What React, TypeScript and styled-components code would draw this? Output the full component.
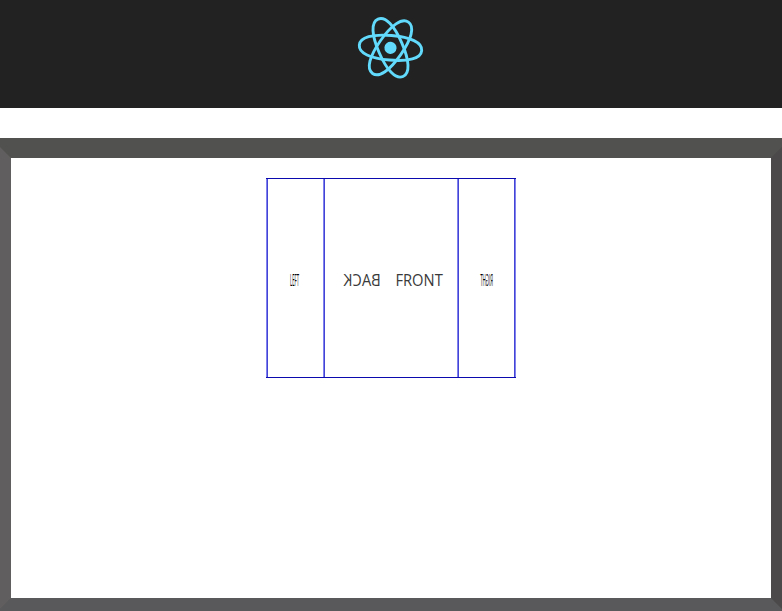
import React from "react";
import styled, { createGlobalStyle } from "styled-components";

const GlobalStyle = createGlobalStyle`
  * { box-sizing: border-box; }
  body { margin: 0; background: #fff; overflow: hidden; }
`;

const Page = styled.div`
  display: flex;
  flex-direction: column;
  height: 611px;
  overflow: hidden;
  font-family: "Open Sans", "Noto Sans", sans-serif;
`;

const Header = styled.header`
  display: flex;
  justify-content: center;
  height: 108px;
  padding-top: 8px;
  background: #222;
`;

const Logo = styled.svg`
  width: 80px;
  height: 80px;
`;

const Stage = styled.main`
  display: flex;
  justify-content: center;
  align-items: flex-start;
  flex: 1;
  margin: 30px -9px -7px;
  padding-top: 20px;
  border: 20px solid;
  border-color: #51514f #4b4949 #59595b #605e5e;
`;

const Cube = styled.div`
  display: grid;
  grid-template-columns: 57px 134px 59px;
  width: 250px;
  height: 200px;
  border-top: 1px solid #0a0aae;
  border-bottom: 1px solid #0a0aae;
`;

const Face = styled.section<{ $last?: boolean }>`
  display: flex;
  align-items: center;
  justify-content: center;
  padding-top: 2px;
  border-left: 1px solid #8080ee;
  border-right: ${(p) => (p.$last ? "1px solid #8080ee" : "none")};
  box-shadow: inset 1px 0 #4444d4${(p) => (p.$last ? ", inset -1px 0 #4444d4" : "")};
`;

const Label = styled.span<{ $scale?: number; $width: number }>`
  display: flex;
  justify-content: center;
  width: ${(p) => p.$width}px;
  font-size: 15.5px;
  line-height: 20px;
  color: ${(p) => (p.$width > 20 ? "#3a3a3a" : "#000")};
  transform: translate(-0.4px, 0.6px) scaleX(${(p) => p.$scale ?? 1});
`;

const orbit = "M-31.3 0C-31.3 -8 -19 -12.3 0 -12.3S31.3 -8 31.3 0S19 12.3 0 12.3S-31.3 8 -31.3 0Z";

export default function App() {
  return (
    <Page>
      <GlobalStyle />
      <Header>
        <Logo viewBox="-40 -40 80 80" aria-label="React">
          <g transform="translate(-0.5 -0.2) rotate(5)" fill="none" stroke="#61dafb" strokeWidth="2.9">
            <path d={orbit} />
            <path d={orbit} transform="rotate(61.5)" />
            <path d={orbit} transform="rotate(120)" />
            <circle r="6.1" fill="#61dafb" stroke="none" />
          </g>
        </Logo>
      </Header>
      <Stage>
        <Cube>
          <Face><Label $width={20} $scale={0.27}>LEFT</Label></Face>
          <Face>
            <Label $width={57} $scale={-0.95}>BACK</Label>
            <Label $width={57} $scale={0.95}>FRONT</Label>
          </Face>
          <Face $last><Label $width={20} $scale={-0.28}>RIGHT</Label></Face>
        </Cube>
      </Stage>
    </Page>
  );
}
